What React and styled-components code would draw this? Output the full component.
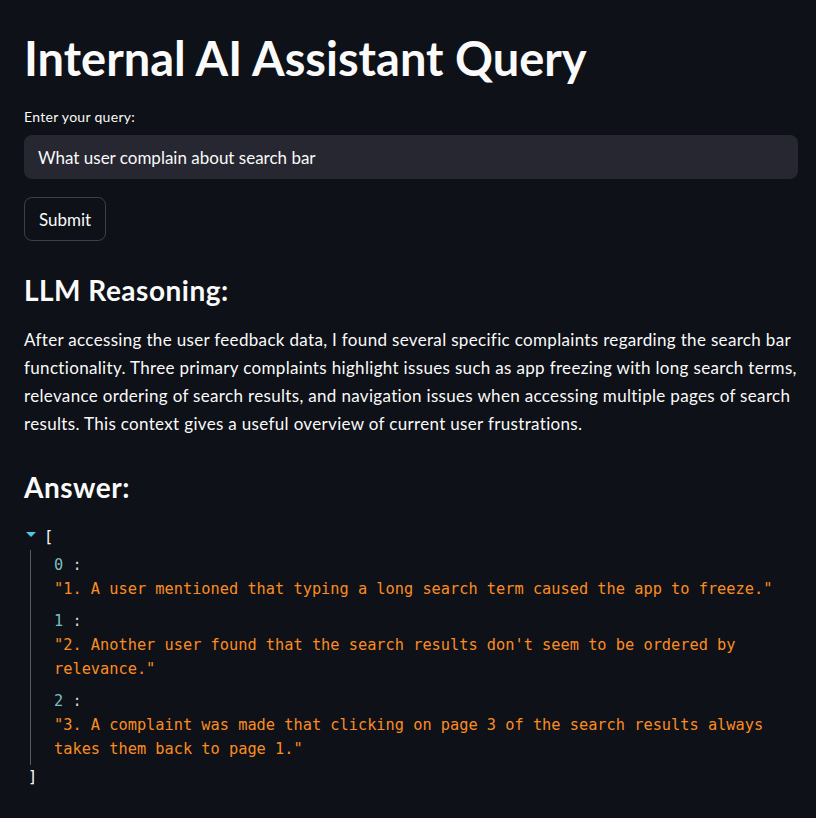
import styled, { createGlobalStyle } from "styled-components";

const GlobalStyle = createGlobalStyle`
  body {
    margin: 0;
    background: #0e1117;
    color: #fafafa;
    font-family: Lato, "Noto Sans", sans-serif;
  }
`;

const answers = [
  "1. A user mentioned that typing a long search term caused the app to freeze.",
  "2. Another user found that the search results don't seem to be ordered by relevance.",
  "3. A complaint was made that clicking on page 3 of the search results always takes them back to page 1.",
];

const App = () => {
  return (
    <>
      <GlobalStyle />
      <Main>
        <Title>Internal AI Assistant Query</Title>
        <Label>Enter your query:</Label>
        <Input>What user complain about search bar</Input>
        <Button>Submit</Button>
        <Heading $top="31px">LLM Reasoning:</Heading>
        <Paragraph>
          After accessing the user feedback data, I found several specific
          complaints regarding the search bar functionality. Three primary
          complaints highlight issues such as app freezing with long search
          terms, relevance ordering of search results, and navigation issues
          when accessing multiple pages of search results. This context gives a
          useful overview of current user frustrations.
        </Paragraph>
        <Heading $top="31px">Answer:</Heading>
        <Json>
          <OpenRow>
            <Caret />
            <Bracket>[</Bracket>
          </OpenRow>
          <Items>
            {answers.map((text, i) => (
              <div key={i}>
                <Key>
                  {i} <Colon>:</Colon>
                </Key>
                <Value>"{text}"</Value>
              </div>
            ))}
          </Items>
          <Bracket $close>]</Bracket>
        </Json>
      </Main>
    </>
  );
};

const Main = styled.div`
  padding: 30px 18px 40px 24px;
  display: flex;
  flex-direction: column;
`;

const Title = styled.h1`
  margin: 0 0 21px;
  font-size: 47px;
  font-weight: 700;
  line-height: 1.2;
`;

const Label = styled.div`
  font-size: 14px;
  line-height: 20px;
  letter-spacing: 0.3px;
  margin-bottom: 8px;
`;

const Input = styled.div`
  height: 44px;
  box-sizing: border-box;
  background: #262730;
  border-radius: 8px;
  padding: 0 14px;
  display: flex;
  align-items: center;
  font-size: 17px;
`;

const Button = styled.button`
  align-self: flex-start;
  margin-top: 18px;
  height: 44px;
  padding: 0 14px;
  background: transparent;
  border: 1px solid rgba(250, 250, 250, 0.2);
  border-radius: 8px;
  color: #fafafa;
  font-family: inherit;
  font-size: 17px;
`;

const Heading = styled.h3`
  margin: ${(p) => p.$top} 0 0;
  font-size: 28px;
  font-weight: 700;
  line-height: 36px;
  letter-spacing: 0.5px;
`;

const Paragraph = styled.p`
  margin: 18px 0 0;
  font-size: 17px;
  line-height: 28px;
  letter-spacing: 0.33px;
`;

const Json = styled.div`
  margin-top: 20px;
  font-family: "DejaVu Sans Mono", "Liberation Mono", monospace;
  font-size: 15.3px;
  line-height: 24px;
`;

const OpenRow = styled.div`
  display: flex;
  align-items: center;
  gap: 8px;
  padding-left: 2px;
`;

const Caret = styled.span`
  width: 0;
  height: 0;
  border-left: 5.5px solid transparent;
  border-right: 5.5px solid transparent;
  border-top: 5px solid #4fc8e6;
  margin-top: -6px;
`;

const Bracket = styled.span`
  color: #fafafa;
  padding-left: ${(p) => (p.$close ? "4px" : "0")};
  margin-top: ${(p) => (p.$close ? "1px" : "0")};
`;

const Items = styled.div`
  margin: 1px 0 0 6px;
  padding: 3px 0 4px 23px;
  border-left: 1px solid #5a5a5a;
  display: flex;
  flex-direction: column;
  gap: 8px;
`;

const Key = styled.div`
  color: #7dbfbd;
`;

const Colon = styled.span`
  color: #d4d4d4;
`;

const Value = styled.div`
  color: #fb8c22;
  padding-right: 16px;
`;

export default App;
